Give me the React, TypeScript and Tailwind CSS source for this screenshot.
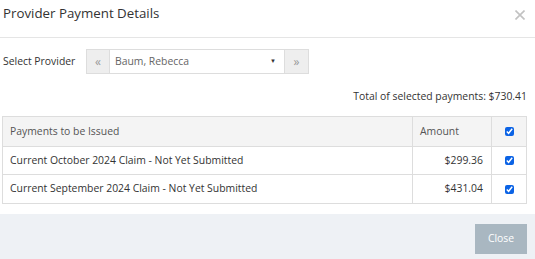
export default function App() {
  const font = { fontFamily: '"Open Sans", sans-serif' };
  return (
    <div className="w-[535px] h-[259px] bg-white overflow-hidden flex flex-col text-[#333]" style={font}>
      <div className="h-[38px] flex items-start justify-between border-b border-[#e5e5e5] pl-[3px] pr-[10px]">
        <div className="text-[13.3px] leading-[20px] mt-[3px] text-[#333]">Provider Payment Details</div>
        <svg width="10" height="10" viewBox="0 0 10 10" className="mt-[10px]">
          <path d="M0.5 0.5 L9.5 9.5 M9.5 0.5 L0.5 9.5" stroke="#c2c2c2" strokeWidth="1.6" />
        </svg>
      </div>
      <div className="flex items-center pl-[3px] mt-[11px] h-[25px]">
        <div className="text-[10.4px] w-[83px]">Select Provider</div>
        <div className="flex h-[25px]">
          <div className="w-[24px] bg-[#eee] border border-[#ddd] flex items-center justify-center text-[#999] text-[12px]">«</div>
          <div className="w-[174px] border-y border-[#ddd] flex items-center justify-between pl-[5px] pr-[8px] text-[10.4px] text-[#666]">
            <span>Baum, Rebecca</span>
            <span className="text-[6px] text-[#333]">▼</span>
          </div>
          <div className="w-[25px] bg-[#eee] border border-[#ddd] flex items-center justify-center text-[#999] text-[12px]">»</div>
        </div>
      </div>
      <div className="text-right pr-[8px] mt-[14px] text-[10.4px] leading-[16px]">Total of selected payments: $730.41</div>
      <div className="mx-[2px] mr-[8px] mt-[12px] border border-[#ddd] text-[10.4px]">
        <div className="flex h-[30px] bg-[#f4f4f4] border-b border-[#ddd] text-[#555]">
          <div className="flex-1 flex items-center pl-[7px]">Payments to be Issued</div>
          <div className="w-[79px] border-l border-[#ddd] flex items-center pl-[7px]">Amount</div>
          <div className="w-[35px] border-l border-[#ddd] flex items-center justify-center">
            <input type="checkbox" defaultChecked className="w-[9px] h-[9px] accent-[#0b63e5]" />
          </div>
        </div>
        {[
          ["Current October 2024 Claim - Not Yet Submitted", "$299.36"],
          ["Current September 2024 Claim - Not Yet Submitted", "$431.04"],
        ].map(([t, a], i) => (
          <div key={i} className={`flex h-[28px] ${i === 0 ? "border-b border-[#ddd]" : ""}`}>
            <div className="flex-1 flex items-center pl-[7px]">{t}</div>
            <div className="w-[79px] border-l border-[#ddd] flex items-center justify-end pr-[8px]">{a}</div>
            <div className="w-[35px] border-l border-[#ddd] flex items-center justify-center">
              <input type="checkbox" defaultChecked className="w-[9px] h-[9px] accent-[#0b63e5]" />
            </div>
          </div>
        ))}
      </div>
      <div className="mt-auto h-[45px] bg-[#eef1f5] flex items-center justify-end pr-[8px]">
        <div className="w-[52px] h-[30px] mt-[4px] bg-[#a9b7c1] text-white text-[10.4px] flex items-center justify-center">Close</div>
      </div>
    </div>
  );
}
